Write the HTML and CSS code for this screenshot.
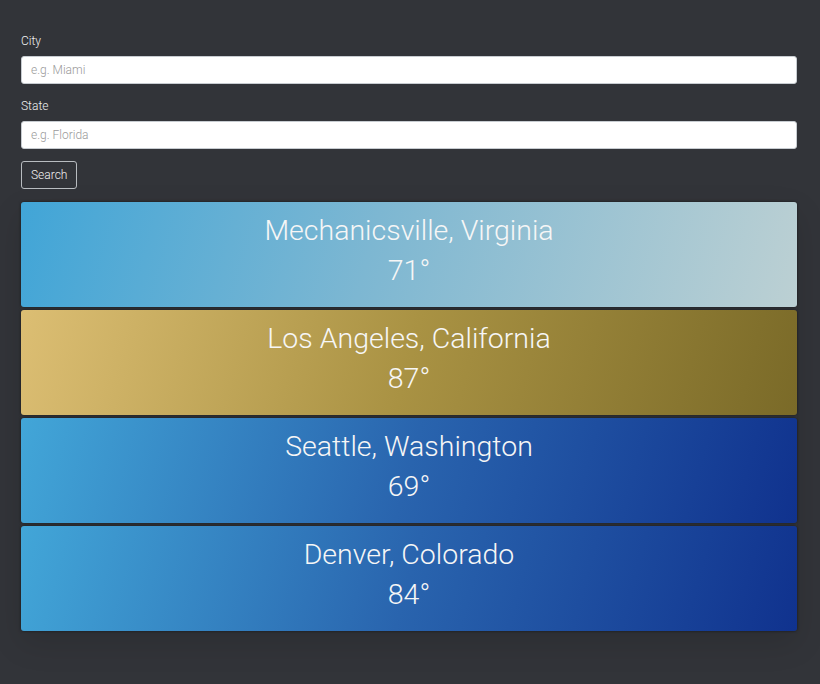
FILE: index.html
```html
<!DOCTYPE html>
<html lang="en">
<head>
<meta charset="utf-8">
<title>Weather</title>
<link rel="stylesheet" href="styles.css">
</head>
<body>
<main class="page">
  <form class="search-form">
    <div class="field">
      <label class="field-label" for="city">City</label>
      <input class="field-input" id="city" type="text" placeholder="e.g. Miami">
    </div>
    <div class="field">
      <label class="field-label" for="state">State</label>
      <input class="field-input" id="state" type="text" placeholder="e.g. Florida">
    </div>
    <button class="search-btn" type="button">Search</button>
  </form>
  <section class="cards">
    <div class="card card-clear">
      <div class="card-place">Mechanicsville, Virginia</div>
      <div class="card-temp">71°</div>
    </div>
    <div class="card card-gold">
      <div class="card-place">Los Angeles, California</div>
      <div class="card-temp">87°</div>
    </div>
    <div class="card card-blue">
      <div class="card-place">Seattle, Washington</div>
      <div class="card-temp">69°</div>
    </div>
    <div class="card card-blue">
      <div class="card-place">Denver, Colorado</div>
      <div class="card-temp">84°</div>
    </div>
  </section>
</main>
</body>
</html>
```
FILE: styles.css
```css
html, body {
  margin: 0;
  padding: 0;
  height: 100%;
}
body {
  background: #323439;
  font-family: Roboto, "Liberation Sans", sans-serif;
  font-weight: 300;
  color: #ececec;
}
.page {
  padding: 32px 23px 0 21px;
}
.search-form {
  display: flex;
  flex-direction: column;
  align-items: flex-start;
}
.field {
  display: flex;
  flex-direction: column;
  width: 100%;
  margin-bottom: 12.5px;
}
.field-label {
  font-size: 12px;
  line-height: 18px;
  margin-bottom: 6px;
  font-weight: 300;
  color: #f0f0f0;
}
.field-input {
  box-sizing: border-box;
  height: 28px;
  width: 100%;
  border: 1px solid #c7ccd1;
  border-radius: 3px;
  padding: 0 9px;
  font-family: Roboto, "Liberation Sans", sans-serif;
  font-weight: 300;
  font-size: 12px;
  background: #fff;
  color: #333;
  outline: none;
}
.field-input::placeholder {
  color: #9a9a9a;
}
.search-btn {
  height: 28px;
  padding: 0 9px;
  background: transparent;
  border: 1px solid #b8bcc0;
  border-radius: 3px;
  color: #f2f2f2;
  font-family: Roboto, "Liberation Sans", sans-serif;
  font-weight: 300;
  font-size: 12px;
}
.cards {
  margin-top: 12.5px;
  display: flex;
  flex-direction: column;
  gap: 3px;
  box-shadow: 0 12px 30px rgba(0, 0, 0, 0.12);
}
.card {
  height: 105px;
  box-sizing: border-box;
  padding: 9.5px 0 15px;
  border-radius: 3px;
  text-align: center;
  color: #f6f6f6;
  font-size: 28.5px;
  line-height: 40px;
  font-weight: 300;
  box-shadow: 0 0 3px rgba(0, 0, 0, 0.55);
}
.card-clear {
  background: linear-gradient(105deg, #41a5d7 0%, #7db7d2 45%, #bcd0d3 100%);
}
.card-gold {
  background: linear-gradient(105deg, #dcbe73 0%, #a99243 50%, #7a6a28 100%);
}
.card-blue {
  background: linear-gradient(105deg, #42a6d8 0%, #2964ae 50%, #10328e 100%);
}
```
